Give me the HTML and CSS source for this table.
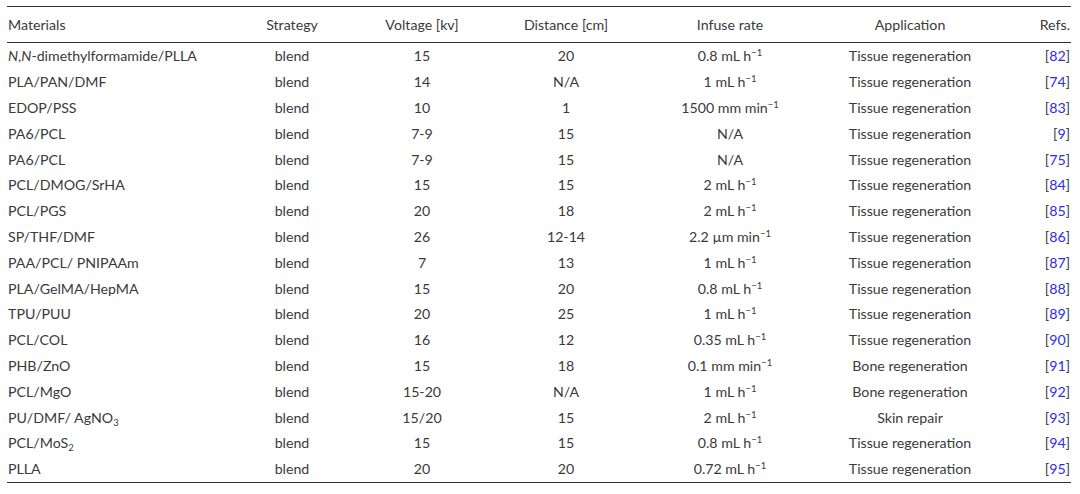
FILE: index.html
```html
<!DOCTYPE html>
<html>
<head>
<meta charset="utf-8">
<link rel="stylesheet" href="styles.css">
</head>
<body>
<div class="wrap">
<table class="data">
<colgroup>
<col class="c1"><col class="c2"><col class="c3"><col class="c4"><col class="c5"><col class="c6"><col class="c7">
</colgroup>
<thead>
<tr><th class="l">Materials</th><th>Strategy</th><th>Voltage [kv]</th><th>Distance [cm]</th><th>Infuse rate</th><th>Application</th><th class="r">Refs.</th></tr>
</thead>
<tbody>
<tr><td class="l"><i>N</i>,<i>N</i>-dimethylformamide/PLLA</td><td>blend</td><td>15</td><td>20</td><td>0.8 mL h<sup>−1</sup></td><td>Tissue regeneration</td><td class="r">[<a>82</a>]</td></tr>
<tr><td class="l">PLA/PAN/DMF</td><td>blend</td><td>14</td><td>N/A</td><td>1 mL h<sup>−1</sup></td><td>Tissue regeneration</td><td class="r">[<a>74</a>]</td></tr>
<tr><td class="l">EDOP/PSS</td><td>blend</td><td>10</td><td>1</td><td>1500 mm min<sup>−1</sup></td><td>Tissue regeneration</td><td class="r">[<a>83</a>]</td></tr>
<tr><td class="l">PA6/PCL</td><td>blend</td><td>7-9</td><td>15</td><td>N/A</td><td>Tissue regeneration</td><td class="r">[<a>9</a>]</td></tr>
<tr><td class="l">PA6/PCL</td><td>blend</td><td>7-9</td><td>15</td><td>N/A</td><td>Tissue regeneration</td><td class="r">[<a>75</a>]</td></tr>
<tr><td class="l">PCL/DMOG/SrHA</td><td>blend</td><td>15</td><td>15</td><td>2 mL h<sup>−1</sup></td><td>Tissue regeneration</td><td class="r">[<a>84</a>]</td></tr>
<tr><td class="l">PCL/PGS</td><td>blend</td><td>20</td><td>18</td><td>2 mL h<sup>−1</sup></td><td>Tissue regeneration</td><td class="r">[<a>85</a>]</td></tr>
<tr><td class="l">SP/THF/DMF</td><td>blend</td><td>26</td><td>12-14</td><td>2.2 µm min<sup>−1</sup></td><td>Tissue regeneration</td><td class="r">[<a>86</a>]</td></tr>
<tr><td class="l">PAA/PCL/ PNIPAAm</td><td>blend</td><td>7</td><td>13</td><td>1 mL h<sup>−1</sup></td><td>Tissue regeneration</td><td class="r">[<a>87</a>]</td></tr>
<tr><td class="l">PLA/GelMA/HepMA</td><td>blend</td><td>15</td><td>20</td><td>0.8 mL h<sup>−1</sup></td><td>Tissue regeneration</td><td class="r">[<a>88</a>]</td></tr>
<tr><td class="l">TPU/PUU</td><td>blend</td><td>20</td><td>25</td><td>1 mL h<sup>−1</sup></td><td>Tissue regeneration</td><td class="r">[<a>89</a>]</td></tr>
<tr><td class="l">PCL/COL</td><td>blend</td><td>16</td><td>12</td><td>0.35 mL h<sup>−1</sup></td><td>Tissue regeneration</td><td class="r">[<a>90</a>]</td></tr>
<tr><td class="l">PHB/ZnO</td><td>blend</td><td>15</td><td>18</td><td>0.1 mm min<sup>−1</sup></td><td>Bone regeneration</td><td class="r">[<a>91</a>]</td></tr>
<tr><td class="l">PCL/MgO</td><td>blend</td><td>15-20</td><td>N/A</td><td>1 mL h<sup>−1</sup></td><td>Bone regeneration</td><td class="r">[<a>92</a>]</td></tr>
<tr><td class="l">PU/DMF/ AgNO<sub>3</sub></td><td>blend</td><td>15/20</td><td>15</td><td>2 mL h<sup>−1</sup></td><td>Skin repair</td><td class="r">[<a>93</a>]</td></tr>
<tr><td class="l">PCL/MoS<sub>2</sub></td><td>blend</td><td>15</td><td>15</td><td>0.8 mL h<sup>−1</sup></td><td>Tissue regeneration</td><td class="r">[<a>94</a>]</td></tr>
<tr><td class="l">PLLA</td><td>blend</td><td>20</td><td>20</td><td>0.72 mL h<sup>−1</sup></td><td>Tissue regeneration</td><td class="r">[<a>95</a>]</td></tr>
</tbody>
</table>
</div>
</body>
</html>
```

FILE: styles.css
```css
html, body {
  margin: 0;
  padding: 0;
  background: #ffffff;
}
.wrap {
  padding: 6px 9px 0 7px;
}
.data {
  width: 1064px;
  border-collapse: collapse;
  table-layout: fixed;
  font-family: "Lato", "Open Sans", sans-serif;
  font-size: 14.2px;
  color: #3a3a3a;
  border-top: 1.5px solid #333333;
  border-bottom: 1.5px solid #333333;
}
.c1 { width: 243px; }
.c2 { width: 84px; }
.c3 { width: 176px; }
.c4 { width: 112px; }
.c5 { width: 216px; }
.c6 { width: 144px; }
.c7 { width: 89px; }
.data th {
  font-weight: normal;
  height: 35px;
  padding: 0;
  text-align: center;
  border-bottom: 1.5px solid #333333;
}
.data td {
  height: 25.8px;
  padding: 0;
  text-align: center;
  white-space: nowrap;
}
.data .l { text-align: left; padding-left: 1px; }
.data .r { text-align: right; padding-right: 1px; }
.data a { color: #2a2aff; }
.data sup {
  font-size: 9.5px;
  line-height: 0;
  vertical-align: 5px;
}
.data sub {
  font-size: 9.5px;
  line-height: 0;
  vertical-align: -3px;
}
```
